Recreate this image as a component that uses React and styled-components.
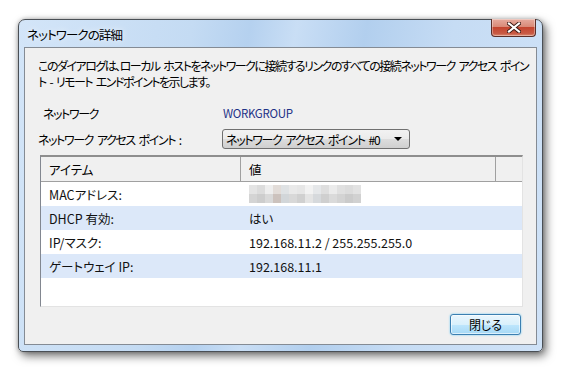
import React from "react";
import styled, { createGlobalStyle } from "styled-components";

const GlobalStyle = createGlobalStyle`
  html, body {
    margin: 0;
    padding: 0;
    background: #ffffff;
  }
  body {
    font-family: "Noto Sans CJK JP", "Liberation Sans", sans-serif;
    font-size: 12px;
    font-feature-settings: "palt";
    color: #000;
  }
`;

const rows = [
  { item: "MACアドレス:", value: null },
  { item: "DHCP 有効:", value: "はい" },
  { item: "IP/マスク:", value: "192.168.11.2 / 255.255.255.0" },
  { item: "ゲートウェイ IP:", value: "192.168.11.1" },
];

// pixelated (mosaic) MAC address
const mosaic = [
  ["#e4e4e4", "#dcdcdc", "#eeeeee", "#e2dcd8", "#dfe2e4", "#e9e9e9", "#e6e6e6", "#f2f2f2", "#e5e7e9", "#dedede", "#ebebeb", "#e0e0e0", "#dcdcdc", "#e2e2e2"],
  ["#d4d4d4", "#cdcdcd", "#d9d9d9", "#ccc2bd", "#d2d6d9", "#d8d8d8", "#d0d0d0", "#e4e4e4", "#d6d9dc", "#cfcfcf", "#dadada", "#d3d3d3", "#cbcbcb", "#d1d1d1"],
];

const App = () => {
  return (
    <>
      <GlobalStyle />
      <Page>
        <Window>
          <TitleBar>
            <Title>ネットワークの詳細</Title>
            <CloseButton>
              <svg width="14" height="11" viewBox="0 0 14 11">
                <path
                  d="M2 1.5 L12 9.5 M12 1.5 L2 9.5"
                  stroke="#3a1a14"
                  strokeWidth="4"
                  strokeLinecap="square"
                />
                <path
                  d="M2 1.5 L12 9.5 M12 1.5 L2 9.5"
                  stroke="#ffffff"
                  strokeWidth="2.2"
                  strokeLinecap="square"
                />
              </svg>
            </CloseButton>
          </TitleBar>
          <Client>
            <Description>
              このダイアログは、ローカル ホストをネットワークに接続するリンクのすべての接続ネットワーク アクセス ポイン
              <br />
              ト - リモート エンドポイントを示します。
            </Description>
            <Form>
              <Label $indent>ネットワーク</Label>
              <Value>WORKGROUP</Value>
              <Label>ネットワーク アクセス ポイント :</Label>
              <Select>
                <span>ネットワーク アクセス ポイント #0</span>
                <Arrow />
              </Select>
            </Form>
            <List>
              <Header>
                <HeadCell>アイテム</HeadCell>
                <HeadCell>値</HeadCell>
                <HeadCell />
              </Header>
              {rows.map((r, i) => (
                <Row key={r.item} $alt={i % 2 === 1}>
                  <Cell>{r.item}</Cell>
                  <Cell>
                    {r.value ? (
                      r.value
                    ) : (
                      <Mosaic>
                        {mosaic.flat().map((c, j) => (
                          <span key={j} style={{ background: c }} />
                        ))}
                      </Mosaic>
                    )}
                  </Cell>
                </Row>
              ))}
            </List>
            <Footer>
              <Button>閉じる</Button>
            </Footer>
          </Client>
        </Window>
      </Page>
    </>
  );
};

const Page = styled.div`
  width: 566px;
  height: 374px;
  padding: 19px 0 0 18px;
  box-sizing: border-box;
`;

const Window = styled.div`
  width: 525px;
  height: 333px;
  box-sizing: border-box;
  border: 1px solid #4a4f55;
  border-radius: 7px 7px 5px 5px;
  background: linear-gradient(
    100deg,
    #d3e5f8 0%,
    #c4dbf3 30%,
    #b5d1ef 40%,
    #c9def5 48%,
    #b2cfee 60%,
    #c6dcf4 75%,
    #cfe2f7 100%
  );
  box-shadow: 3px 4px 10px rgba(0, 0, 0, 0.55), 0 0 4px rgba(0, 0, 0, 0.25);
  display: flex;
  flex-direction: column;
  padding: 0 5px 6px 5px;
`;

const TitleBar = styled.div`
  height: 27px;
  display: flex;
  align-items: flex-start;
  justify-content: space-between;
`;

const Title = styled.div`
  padding: 5px 0 0 3px;
  font-size: 12.5px;
  letter-spacing: -0.9px;
  color: #000;
  text-shadow: 0 0 6px rgba(255, 255, 255, 0.9);
`;

const CloseButton = styled.div`
  width: 45px;
  height: 18px;
  box-sizing: border-box;
  margin-right: 1px;
  margin-top: -1px;
  border: 1px solid #5a2e28;
  border-top: none;
  border-radius: 0 0 4px 4px;
  background: linear-gradient(
    to bottom,
    #e6ab9e 0%,
    #d98a78 45%,
    #c4452f 50%,
    #c85a44 85%,
    #dc8b72 100%
  );
  box-shadow: inset 0 0 0 1px rgba(255, 255, 255, 0.35);
  display: flex;
  align-items: center;
  justify-content: center;
`;

const Client = styled.div`
  flex: 1;
  background: #f0f0f0;
  border: 1px solid #848b94;
  display: flex;
  flex-direction: column;
  padding: 10px 14px 9px 14px;
`;

const Description = styled.div`
  line-height: 16px;
  margin-left: -1px;
  white-space: nowrap;
  letter-spacing: -1.5px;
  word-spacing: 2.5px;
`;

const Form = styled.div`
  display: grid;
  grid-template-columns: 183px 188px;
  grid-template-rows: 24px 20px;
  row-gap: 4px;
  align-items: center;
  margin-top: 11px;
`;

const Label = styled.div`
  padding-left: ${(p) => (p.$indent ? "5px" : "0")};
  margin-left: -1px;
  white-space: nowrap;
  letter-spacing: -1.4px;
  word-spacing: 2.5px;
`;

const Value = styled.div`
  color: #1e3287;
  padding-left: 1px;
  font-size: 11.5px;
  letter-spacing: -0.3px;
`;

const Select = styled.div`
  height: 20px;
  box-sizing: border-box;
  border: 1px solid #707070;
  border-radius: 3px;
  background: linear-gradient(
    to bottom,
    #f2f2f2 0%,
    #ebebeb 50%,
    #dddddd 51%,
    #cfcfcf 100%
  );
  display: flex;
  align-items: center;
  justify-content: space-between;
  padding: 0 7px 0 3px;
  white-space: nowrap;
  font-size: 12px;
  letter-spacing: -1.3px;
  word-spacing: 2.5px;
`;

const Arrow = styled.span`
  width: 0;
  height: 0;
  border-left: 4px solid transparent;
  border-right: 4px solid transparent;
  border-top: 4px solid #000;
`;

const List = styled.div`
  flex: 1;
  margin-top: 6px;
  margin-left: 1px;
  box-sizing: border-box;
  border: 1px solid #828790;
  border-top: 2px solid #8e8e8e;
  border-right-color: #e3e3e3;
  border-bottom-color: #e3e3e3;
  background: #ffffff;
  width: 483px;
`;

const Header = styled.div`
  display: grid;
  grid-template-columns: 200px 255px 1fr;
  height: 24px;
  background: #f0f0f0;
  border-bottom: 1px solid #a0a0a0;
`;

const HeadCell = styled.div`
  display: flex;
  align-items: center;
  padding-left: 8px;
  font-size: 12.5px;
  border-right: 1px solid #a0a0a0;
  &:last-child {
    border-right: none;
  }
`;

const Row = styled.div`
  display: grid;
  grid-template-columns: 200px 1fr;
  height: 24px;
  background: ${(p) => (p.$alt ? "#dce8f9" : "#ffffff")};
`;

const Cell = styled.div`
  display: flex;
  align-items: center;
  padding-left: 8px;
  color: #111;
  font-size: 12.5px;
`;

const Mosaic = styled.div`
  display: grid;
  grid-template-columns: repeat(14, 8px);
  grid-auto-rows: 9px;
  span {
    display: block;
  }
`;

const Footer = styled.div`
  display: flex;
  justify-content: flex-end;
  margin-top: 7px;
  padding-right: 1px;
`;

const Button = styled.div`
  width: 71px;
  height: 21px;
  box-sizing: border-box;
  border: 1px solid #3c7fb1;
  border-radius: 3px;
  background: linear-gradient(
    to bottom,
    #eaf6fd 0%,
    #d9f0fc 50%,
    #bee6fd 51%,
    #a7d9f5 100%
  );
  box-shadow: inset 0 0 0 1px rgba(255, 255, 255, 0.6), 0 0 2px #5fc4f3;
  display: flex;
  align-items: center;
  justify-content: center;
  font-size: 12px;
`;

export default App;
